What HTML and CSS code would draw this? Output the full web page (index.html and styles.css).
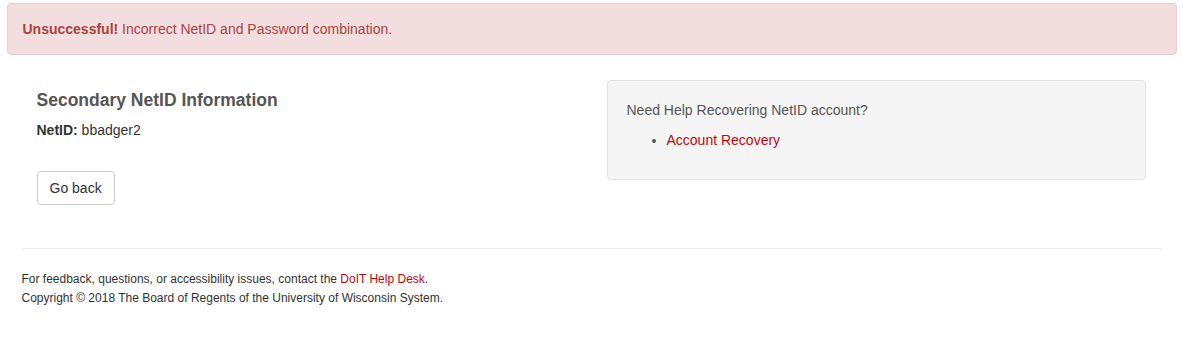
FILE: index.html
```html
<!DOCTYPE html>
<html>
<head>
  <title>Secondary NetID</title>
  <link rel="stylesheet" href="styles.css">
</head>
<body>
  <div class="container">
    <div class="alert">
      <strong>Unsuccessful!</strong> Incorrect NetID and Password combination.
    </div>

    <div class="row">
      <div class="col">
        <div class="info">
          <h4>Secondary NetID Information</h4>
          <p><strong>NetID:</strong> bbadger2</p>
          <button class="btn" type="button">Go back</button>
        </div>
      </div>
      <div class="col">
        <div class="well">
          <p>Need Help Recovering NetID account?</p>
          <ul>
            <li><a href="#">Account Recovery</a></li>
          </ul>
        </div>
      </div>
    </div>

    <div class="footer">
      <hr>
      <p>For feedback, questions, or accessibility issues, contact the <a href="#">DoIT Help Desk</a>.</p>
      <p>Copyright &copy; 2018 The Board of Regents of the University of Wisconsin System.</p>
    </div>
  </div>
</body>
</html>
```

FILE: styles.css
```css
body {
  margin: 0;
  font-family: "Liberation Sans", Arial, sans-serif;
  font-size: 14px;
  line-height: 20px;
  color: #333;
  background: #fff;
}

a {
  color: #c5050c;
  text-decoration: none;
}

.container {
  width: 1170px;
  margin: 0 auto;
}

.alert {
  margin: 3px 0 25px 0;
  padding: 16px 15px 15px;
  background-color: #f2dede;
  border: 1px solid #ebccd1;
  border-radius: 4px;
  color: #a94442;
  line-height: 19px;
}

.row {
  display: grid;
  grid-template-columns: 1fr 1fr;
}

.col {
  padding: 0 15px;
}

.info {
  padding-left: 15px;
}

.info .btn {
  margin-top: 11px;
}

h4 {
  margin: 10px 0;
  font-size: 17.5px;
  font-weight: bold;
  line-height: 20px;
  color: #555;
}

p {
  margin: 0 0 10px;
}

.btn {
  display: inline-block;
  padding: 6px 12px;
  font-family: inherit;
  font-size: 14px;
  line-height: 20px;
  color: #333;
  background: #fff;
  border: 1px solid #ccc;
  border-radius: 4px;
  cursor: pointer;
}

.info p {
  margin-bottom: 20px;
}

.well {
  margin-right: 16px;
  padding: 19px;
  background-color: #f5f5f5;
  border: 1px solid #e3e3e3;
  border-radius: 4px;
  color: #555;
}

.well ul {
  margin: 0 0 10px;
  padding-left: 40px;
}

.footer {
  padding: 0 15px;
  margin-top: 43px;
  font-size: 12px;
  line-height: 19px;
}

.footer hr {
  margin: 0 0 21px;
  border: 0;
  border-top: 1px solid #eee;
}

.footer p {
  margin: 0;
}
```
